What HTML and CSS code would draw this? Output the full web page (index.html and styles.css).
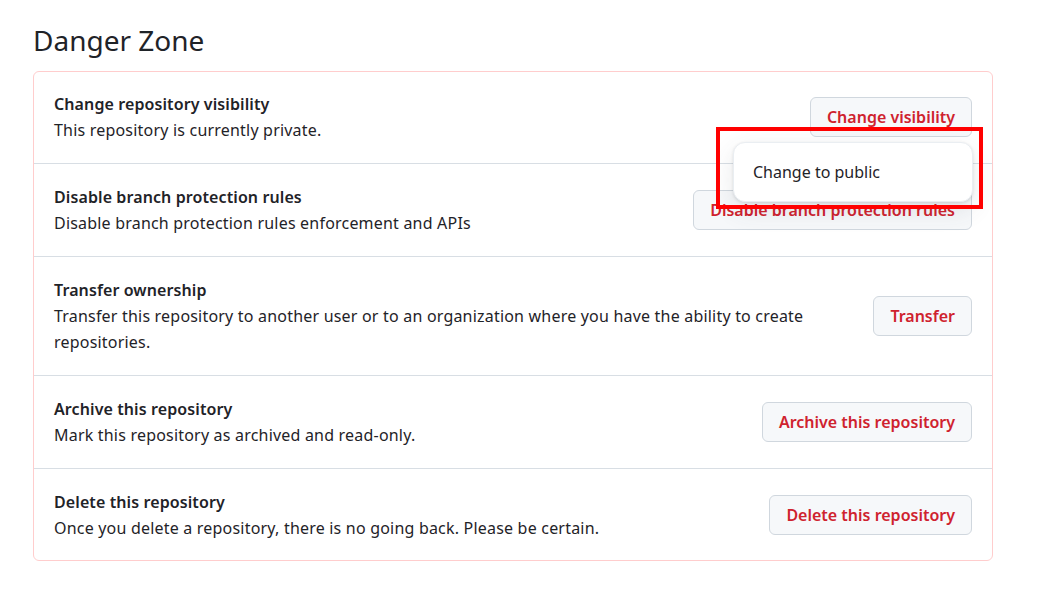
FILE: index.html
```html
<!DOCTYPE html>
<html>
<head>
<meta charset="utf-8">
<link rel="stylesheet" href="styles.css">
</head>
<body>
<div class="page">
  <h2 class="heading">Danger Zone</h2>
  <div class="zone">
    <div class="row">
      <div class="info">
        <div class="title">Change repository visibility</div>
        <div class="desc">This repository is currently private.</div>
      </div>
      <div class="action">
        <button class="btn">Change visibility</button>
        <div class="menu">Change to public</div>
        <div class="highlight"></div>
      </div>
    </div>
    <div class="row">
      <div class="info">
        <div class="title">Disable branch protection rules</div>
        <div class="desc">Disable branch protection rules enforcement and APIs</div>
      </div>
      <div class="action">
        <button class="btn">Disable branch protection rules</button>
      </div>
    </div>
    <div class="row">
      <div class="info">
        <div class="title">Transfer ownership</div>
        <div class="desc">Transfer this repository to another user or to an organization where you have the ability to create repositories.</div>
      </div>
      <div class="action">
        <button class="btn">Transfer</button>
      </div>
    </div>
    <div class="row">
      <div class="info">
        <div class="title">Archive this repository</div>
        <div class="desc">Mark this repository as archived and read-only.</div>
      </div>
      <div class="action">
        <button class="btn">Archive this repository</button>
      </div>
    </div>
    <div class="row">
      <div class="info">
        <div class="title">Delete this repository</div>
        <div class="desc">Once you delete a repository, there is no going back. Please be certain.</div>
      </div>
      <div class="action">
        <button class="btn">Delete this repository</button>
      </div>
    </div>
  </div>
</div>
</body>
</html>
```
FILE: styles.css
```css
* { box-sizing: border-box; }
body {
  margin: 0;
  background: #ffffff;
  font-family: "Noto Sans", "Open Sans", sans-serif;
  color: #1f2328;
}
.page {
  width: 993px;
  padding: 19px 0 0 33px;
}
.heading {
  margin: 0 0 10px 0;
  font-size: 28px;
  font-weight: 400;
  line-height: 42px;
}
.zone {
  border: 1px solid #ffcdcd;
  border-radius: 6px;
}
.row {
  display: flex;
  align-items: center;
  gap: 24px;
  padding: 20px 20px;
  border-top: 1px solid #d8dee4;
}
.row:first-child { border-top: none; padding-top: 19px; }
.row:last-child { padding-bottom: 19px; }
.info {
  flex: 1;
  font-size: 16px;
  line-height: 26px;
}
.title { font-weight: 600; letter-spacing: 0.1px; }
.desc { letter-spacing: 0.2px; }
.action {
  position: relative;
  flex: none;
}
.btn {
  display: block;
  height: 40px;
  padding: 0 16px;
  font-family: inherit;
  font-size: 16px;
  font-weight: 600;
  color: #cf222e;
  background: #f6f8fa;
  border: 1px solid #d0d7de;
  border-radius: 6px;
}
.menu {
  position: absolute;
  top: 45px;
  right: -1px;
  width: 240px;
  height: 60px;
  padding-left: 19px;
  display: flex;
  align-items: center;
  background: #ffffff;
  border: 1px solid #eaeef2;
  border-radius: 12px;
  box-shadow: 0 1px 3px rgba(31,35,40,0.12), 0 8px 24px rgba(66,74,83,0.12);
  font-size: 16px;
  font-weight: 400;
  color: #1f2328;
  z-index: 2;
}
.highlight {
  position: absolute;
  top: 30px;
  right: -11px;
  width: 267px;
  height: 82px;
  border: 4px solid #ff0000;
  z-index: 3;
}
```
